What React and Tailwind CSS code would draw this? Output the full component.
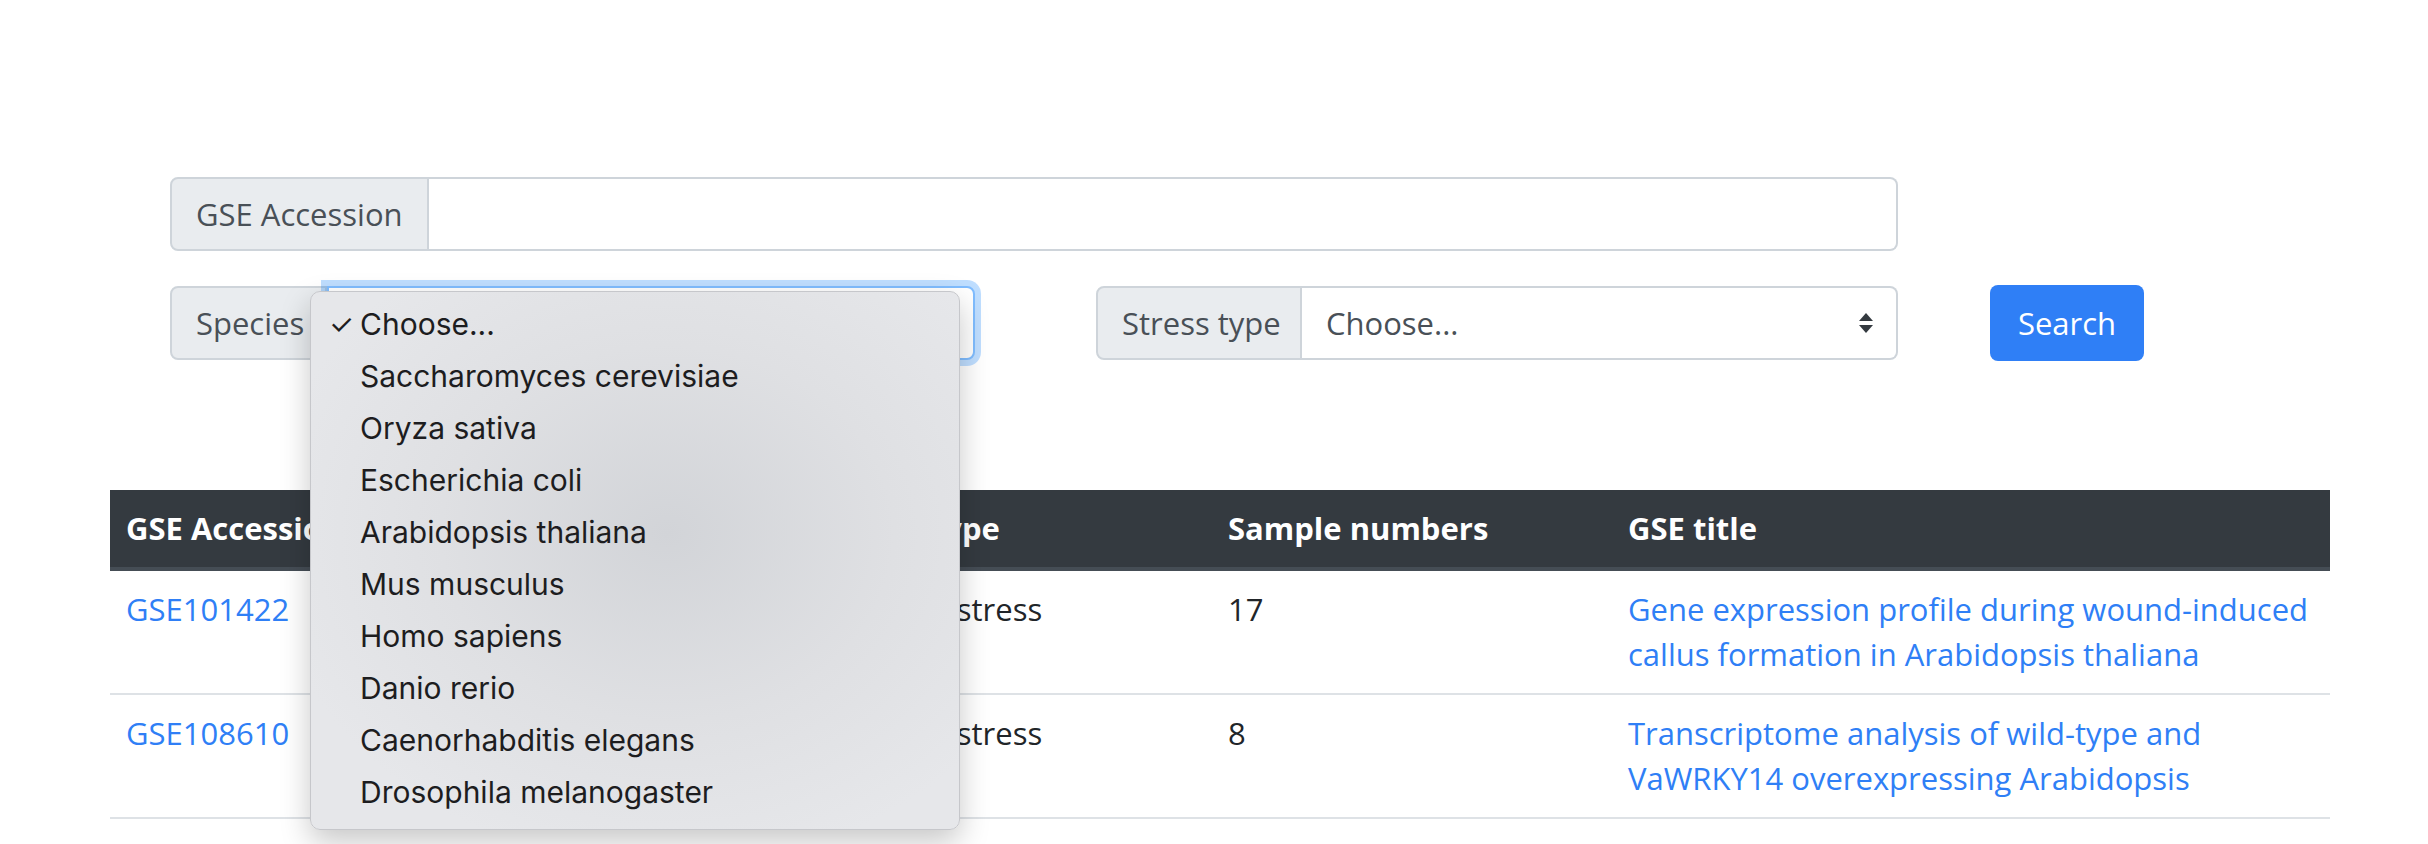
import React from 'react';

const species = [
  'Choose...',
  'Saccharomyces cerevisiae',
  'Oryza sativa',
  'Escherichia coli',
  'Arabidopsis thaliana',
  'Mus musculus',
  'Homo sapiens',
  'Danio rerio',
  'Caenorhabditis elegans',
  'Drosophila melanogaster',
];

const rows = [
  {
    id: 'GSE101422',
    species: 'Arabidopsis thaliana',
    stress: 'Drought stress',
    samples: '17',
    title: ['Gene expression profile during wound-induced', 'callus formation in Arabidopsis thaliana'],
  },
  {
    id: 'GSE108610',
    species: 'Arabidopsis thaliana',
    stress: 'Drought stress',
    samples: '8',
    title: ['Transcriptome analysis of wild-type and', 'VaWRKY14 overexpressing Arabidopsis'],
  },
];

function UpDown() {
  return (
    <svg width="16" height="20" viewBox="0 0 16 20" className="shrink-0">
      <path d="M8 0 L15 8 L1 8 Z" fill="#343a40" />
      <path d="M1 12 L15 12 L8 20 Z" fill="#343a40" />
    </svg>
  );
}

function SpeciesMenu() {
  return (
    <div className="absolute left-[140px] top-[5px] z-10 w-[650px] rounded-[10px] border border-[#c6c7cb] bg-[radial-gradient(ellipse_at_55%_45%,#d2d4d8_0%,#dfe0e3_45%,#e6e7ea_80%)] pb-[11px] pt-[6px] shadow-[0_12px_30px_rgba(0,0,0,0.22)] font-['Inter',sans-serif] text-[30px] text-[#1d1d1f]">
      {species.map((s, i) => (
        <div key={s} className="flex h-[52px] items-center pl-[18px]">
          <span className="w-[31px] text-[28px]">{i === 0 ? '✓' : ''}</span>
          <span>{s}</span>
        </div>
      ))}
    </div>
  );
}

export default function App() {
  return (
    <div className="min-h-screen bg-white font-['Open_Sans',sans-serif] text-[31px] leading-[45px] text-[#212529]">
      <div className="ml-[110px] w-[2220px] pt-[177px]">
        {/* search form */}
        <div className="pl-[60px]">
          <div className="flex h-[74px] w-[1728px]">
            <span className="flex items-center rounded-l-[8px] border-2 border-[#ced4da] bg-[#e9ecef] px-[24px] text-[#495057]">
              GSE Accession
            </span>
            <input className="flex-1 rounded-r-[8px] border-2 border-l-0 border-[#ced4da] bg-white outline-none" />
          </div>

          <div className="mt-[34px] flex items-center">
            <div className="relative flex h-[74px] w-[805px]">
              <span className="flex w-[157px] items-center rounded-l-[8px] border-2 border-[#ced4da] bg-[#e9ecef] px-[24px] text-[#495057]">
                Species
              </span>
              <div className="flex flex-1 items-center rounded-r-[8px] border-2 border-[#80bdff] bg-white pl-[24px] text-[#495057] shadow-[0_0_0_6px_rgba(0,123,255,0.25)]">
                Choose...
              </div>
              <SpeciesMenu />
            </div>

            <div className="ml-[121px] flex h-[74px] w-[802px]">
              <span className="flex w-[206px] items-center whitespace-nowrap rounded-l-[8px] border-2 border-[#ced4da] bg-[#e9ecef] px-[24px] text-[#495057]">
                Stress type
              </span>
              <div className="flex flex-1 items-center justify-between rounded-r-[8px] border-2 border-l-0 border-[#ced4da] bg-white pl-[24px] pr-[22px] text-[#495057]">
                <span>Choose...</span>
                <UpDown />
              </div>
            </div>

            <button className="ml-[92px] h-[76px] w-[154px] rounded-[8px] bg-[#2f7ff6] text-white">Search</button>
          </div>
        </div>

        {/* results */}
        <table className="mt-[129px] w-[2220px] table-fixed border-collapse text-left">
          <thead>
            <tr className="bg-[#343a40] text-white">
              <th className="w-[340px] border-b-4 border-[#454d55] px-[16px] py-[16px] font-bold">GSE Accession</th>
              <th className="w-[363px] border-b-4 border-[#454d55] px-[16px] py-[16px] font-bold">Species</th>
              <th className="w-[399px] border-b-4 border-[#454d55] px-[16px] py-[16px] font-bold">Stress type</th>
              <th className="w-[400px] border-b-4 border-[#454d55] px-[16px] py-[16px] font-bold">Sample numbers</th>
              <th className="w-[718px] border-b-4 border-[#454d55] px-[16px] py-[16px] font-bold">GSE title</th>
            </tr>
          </thead>
          <tbody>
            {rows.map((r) => (
              <tr key={r.id} className="border-b-2 border-[#dee2e6] align-top">
                <td className="px-[16px] py-[16px]">
                  <a href="#" className="text-[#2f7ff6]">{r.id}</a>
                </td>
                <td className="px-[16px] py-[16px]">{r.species}</td>
                <td className="px-[16px] py-[16px]">{r.stress}</td>
                <td className="px-[16px] py-[16px]">{r.samples}</td>
                <td className="px-[16px] py-[16px]">
                  <a href="#" className="text-[#2f7ff6]">
                    {r.title.map((t) => (
                      <span key={t} className="block whitespace-nowrap">{t}</span>
                    ))}
                  </a>
                </td>
              </tr>
            ))}
          </tbody>
        </table>
      </div>
    </div>
  );
}
